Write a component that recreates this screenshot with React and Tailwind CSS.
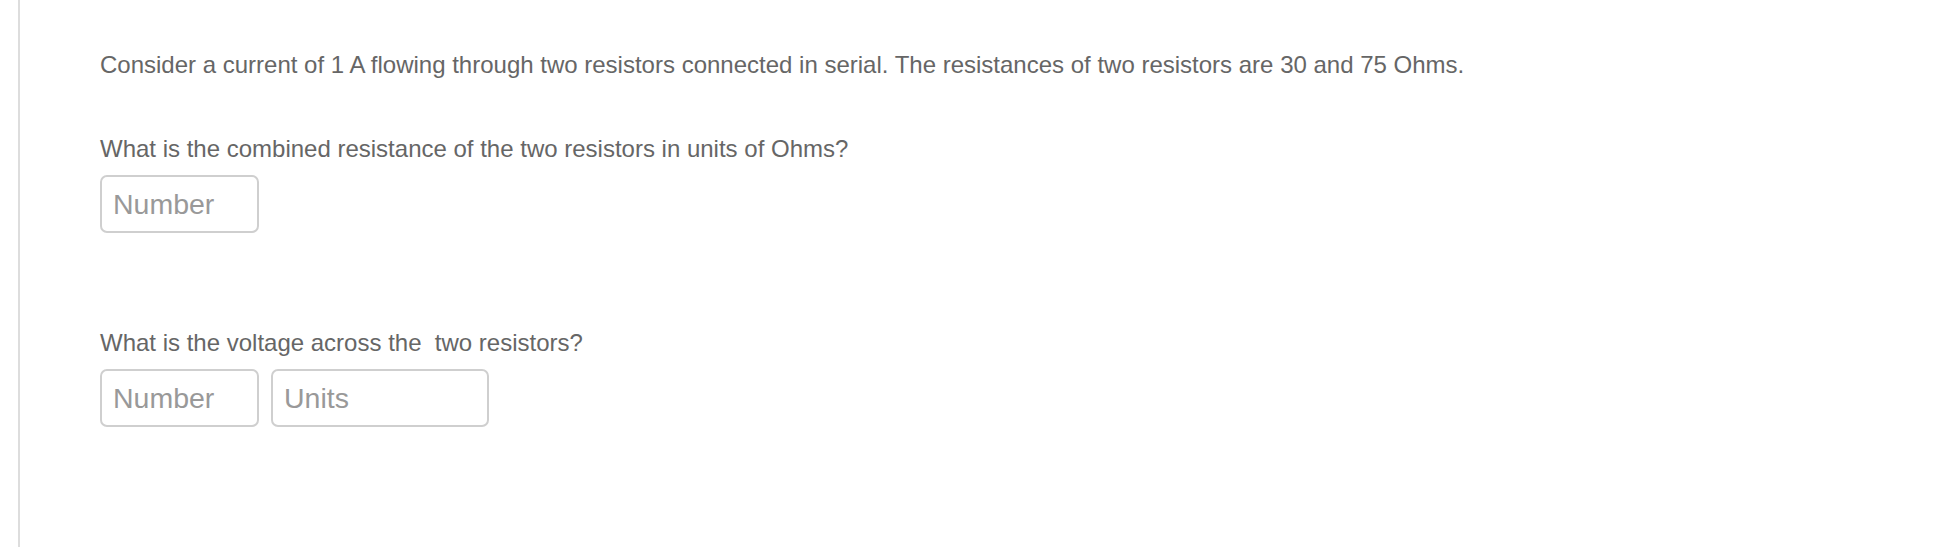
export default function App() {
  const textCls = "text-[24px] leading-[28px] text-[#666]";
  const inputCls =
    "h-[58px] rounded-[7px] border-2 border-[#cfcfcf] bg-white pl-[11px] text-[28.5px] text-[#444] placeholder-[#999] placeholder:text-[#999] focus:outline-none";

  return (
    <div className="h-[547px] w-full bg-white" style={{ fontFamily: '"Liberation Sans", Arial, Helvetica, sans-serif' }}>
      <div className="ml-[18px] h-full border-l-2 border-[#dddddd] pl-[80px]">
        <p className={`${textCls} pt-[51px]`}>
          Consider a current of 1 A flowing through two resistors connected in serial. The resistances of two resistors are 30 and 75 Ohms.
        </p>

        <p className={`${textCls} mt-[56px]`}>What is the combined resistance of the two resistors in units of Ohms?</p>
        <div className="mt-[12px] flex">
          <input type="text" placeholder="Number" className={`${inputCls} w-[159px]`} />
        </div>

        <p className={`${textCls} mt-[96px]`}>What is the voltage across the{"\u00a0"} two resistors?</p>
        <div className="mt-[12px] flex gap-[12px]">
          <input type="text" placeholder="Number" className={`${inputCls} w-[159px]`} />
          <input type="text" placeholder="Units" className={`${inputCls} w-[218px]`} />
        </div>
      </div>
    </div>
  );
}
